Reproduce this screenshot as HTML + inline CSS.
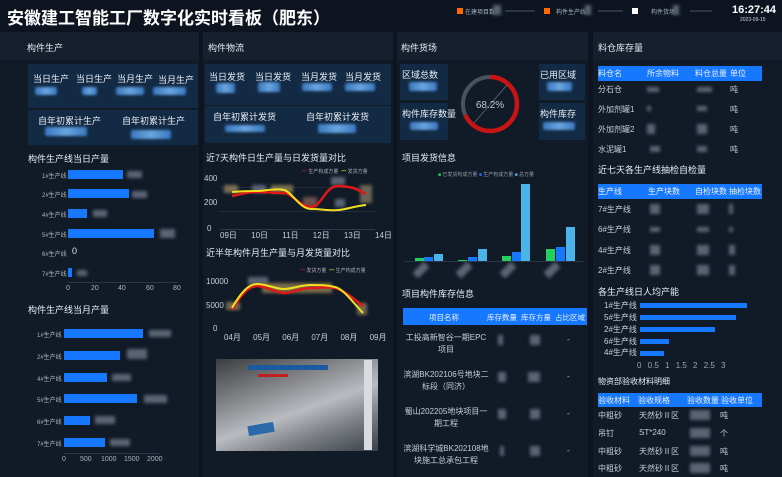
<!DOCTYPE html>
<html><head><meta charset="utf-8"><style>
*{margin:0;padding:0;box-sizing:border-box}
body{width:782px;height:477px;overflow:hidden;background:#0d1420;font-family:"Liberation Sans","Noto Sans CJK SC",sans-serif;color:#d8e0ea;position:relative}
.a{position:absolute;white-space:nowrap}
.p{position:absolute;background:#111a27}
.h{position:absolute;background:#151f2d;font-size:9px;color:#e6ecf3;padding-left:0}
.box{position:absolute;background:#132a44}
.bl{position:absolute;height:8px;border-radius:2px;background:linear-gradient(90deg,#3a78c0,#6aa6e0,#3a78c0);filter:blur(1.2px)}
.gr{position:absolute;background:#5a6474;filter:blur(1.5px)}
.t{font-size:9px;color:#e8eef5}
.s{font-size:6px;color:#a9b3c2}
.bar{position:absolute;background:#1677ff}
.th{position:absolute;background:#1677ff;color:#e8f1ff;font-size:8px}
.r{font-size:8px;color:#c7ced8}
</style></head><body>
<div class="a" style="left:7px;top:4px;font-size:17px;font-weight:bold;color:#fff">安徽建工智能工厂数字化实时看板（肥东）</div>
<div class="a" style="left:457px;top:8px;width:6px;height:6px;background:#ff6a00"></div><div class="a s" style="left:465px;top:7px">在建项目数</div><div class="gr" style="left:493px;top:5px;width:8px;height:10px"></div><div class="a" style="left:505px;top:10px;width:30px;height:2px;background:#2a3444"></div>
<div class="a" style="left:544px;top:8px;width:6px;height:6px;background:#ff6a00"></div><div class="a s" style="left:556px;top:7px">构件生产线</div><div class="gr" style="left:585px;top:5px;width:6px;height:10px"></div><div class="a" style="left:598px;top:10px;width:25px;height:2px;background:#2a3444"></div>
<div class="a" style="left:632px;top:8px;width:6px;height:6px;background:#fff"></div><div class="a s" style="left:651px;top:7px">构件货场</div><div class="gr" style="left:673px;top:5px;width:6px;height:10px"></div><div class="a" style="left:690px;top:10px;width:22px;height:2px;background:#2a3444"></div>
<div class="a" style="left:732px;top:4px;font-size:11px;font-weight:bold;color:#fff">16:27:44</div>
<div class="a" style="left:740px;top:17px;font-size:5px;color:#cfd6e0">2023-09-15</div>

<div class="p" style="left:0;top:32px;width:199px;height:445px"></div>
<div class="p" style="left:203px;top:32px;width:190px;height:445px"></div>
<div class="p" style="left:397px;top:32px;width:191px;height:445px"></div>
<div class="p" style="left:593px;top:32px;width:189px;height:445px"></div>
<div class="h" style="left:0;top:32px;width:199px;height:28px"><span class="a" style="left:27px;top:9px">构件生产</span></div>
<div class="h" style="left:203px;top:32px;width:190px;height:28px"><span class="a" style="left:5px;top:9px">构件物流</span></div>
<div class="h" style="left:397px;top:32px;width:191px;height:28px"><span class="a" style="left:4px;top:9px">构件货场</span></div>
<div class="h" style="left:593px;top:32px;width:189px;height:28px"><span class="a" style="left:5px;top:9px">料仓库存量</span></div>

<div class="box" style="left:28px;top:64px;width:170px;height:44px"></div>
<div class="box" style="left:28px;top:110px;width:170px;height:35px"></div>
<div class="a t" style="left:33px;top:72px">当日生产</div><div class="a t" style="left:76px;top:72px">当日生产</div><div class="a t" style="left:117px;top:72px">当月生产</div><div class="a t" style="left:158px;top:73px">当月生产</div>
<div class="bl" style="left:35px;top:87px;width:22px"></div><div class="bl" style="left:82px;top:87px;width:15px"></div><div class="bl" style="left:116px;top:87px;width:28px"></div><div class="bl" style="left:153px;top:87px;width:33px"></div>
<div class="a t" style="left:38px;top:114px">自年初累计生产</div><div class="a t" style="left:122px;top:114px">自年初累计生产</div>
<div class="bl" style="left:45px;top:127px;width:42px;height:9px"></div><div class="bl" style="left:131px;top:130px;width:40px;height:9px"></div>

<div class="a t" style="left:28px;top:152px">构件生产线当日产量</div>
<div class="a s" style="left:42px;top:171px">1#生产线</div><div class="bar" style="left:68px;top:170px;width:55px;height:9px"></div><div class="gr" style="left:127px;top:171px;width:15px;height:7px"></div>
<div class="a s" style="left:42px;top:190px">2#生产线</div><div class="bar" style="left:68px;top:189px;width:61px;height:9px"></div><div class="gr" style="left:132px;top:191px;width:15px;height:7px"></div>
<div class="a s" style="left:42px;top:210px">4#生产线</div><div class="bar" style="left:68px;top:209px;width:19px;height:9px"></div><div class="gr" style="left:93px;top:210px;width:14px;height:7px"></div>
<div class="a s" style="left:42px;top:230px">5#生产线</div><div class="bar" style="left:68px;top:229px;width:86px;height:9px"></div><div class="gr" style="left:160px;top:229px;width:15px;height:9px"></div>
<div class="a s" style="left:42px;top:249px">6#生产线</div><div class="a" style="left:72px;top:246px;font-size:9px">0</div>
<div class="a s" style="left:42px;top:269px">7#生产线</div><div class="bar" style="left:68px;top:268px;width:4px;height:9px"></div><div class="gr" style="left:77px;top:270px;width:10px;height:6px"></div>
<div class="a" style="left:68px;top:282px;width:110px;height:1px;background:#2b3545"></div>
<div class="a s" style="left:66px;top:285px;font-size:7px">0</div><div class="a s" style="left:91px;top:285px;font-size:7px">20</div><div class="a s" style="left:118px;top:285px;font-size:7px">40</div><div class="a s" style="left:146px;top:285px;font-size:7px">60</div><div class="a s" style="left:173px;top:285px;font-size:7px">80</div>

<div class="a t" style="left:28px;top:303px">构件生产线当月产量</div>
<div class="a s" style="left:37px;top:330px">1#生产线</div><div class="bar" style="left:64px;top:329px;width:79px;height:9px"></div><div class="gr" style="left:149px;top:330px;width:22px;height:7px"></div>
<div class="a s" style="left:37px;top:352px">2#生产线</div><div class="bar" style="left:64px;top:351px;width:56px;height:9px"></div><div class="gr" style="left:127px;top:349px;width:20px;height:10px"></div>
<div class="a s" style="left:37px;top:374px">4#生产线</div><div class="bar" style="left:64px;top:373px;width:43px;height:9px"></div><div class="gr" style="left:112px;top:374px;width:19px;height:7px"></div>
<div class="a s" style="left:37px;top:395px">5#生产线</div><div class="bar" style="left:64px;top:394px;width:73px;height:9px"></div><div class="gr" style="left:144px;top:395px;width:23px;height:8px"></div>
<div class="a s" style="left:37px;top:417px">6#生产线</div><div class="bar" style="left:64px;top:416px;width:26px;height:9px"></div><div class="gr" style="left:95px;top:416px;width:20px;height:8px"></div>
<div class="a s" style="left:37px;top:439px">7#生产线</div><div class="bar" style="left:64px;top:438px;width:41px;height:9px"></div><div class="gr" style="left:110px;top:439px;width:20px;height:7px"></div>
<div class="a" style="left:64px;top:453px;width:95px;height:1px;background:#2b3545"></div>
<div class="a s" style="left:62px;top:456px;font-size:7px">0</div><div class="a s" style="left:80px;top:456px;font-size:7px">500</div><div class="a s" style="left:101px;top:456px;font-size:7px">1000</div><div class="a s" style="left:124px;top:456px;font-size:7px">1500</div><div class="a s" style="left:147px;top:456px;font-size:7px">2000</div>

<div class="box" style="left:205px;top:64px;width:186px;height:41px"></div>
<div class="box" style="left:205px;top:106px;width:186px;height:37px"></div>
<div class="a t" style="left:209px;top:70px">当日发货</div><div class="a t" style="left:255px;top:70px">当日发货</div><div class="a t" style="left:301px;top:70px">当月发货</div><div class="a t" style="left:345px;top:70px">当月发货</div>
<div class="bl" style="left:216px;top:83px;width:19px;height:10px"></div><div class="bl" style="left:258px;top:82px;width:22px;height:10px"></div><div class="bl" style="left:302px;top:83px;width:30px"></div><div class="bl" style="left:345px;top:83px;width:30px"></div>
<div class="a t" style="left:213px;top:110px">自年初累计发货</div><div class="a t" style="left:306px;top:110px">自年初累计发货</div>
<div class="bl" style="left:225px;top:125px;width:40px;height:7px"></div><div class="bl" style="left:318px;top:124px;width:38px;height:9px"></div>

<div class="a t" style="left:206px;top:151px">近7天构件日生产量与日发货量对比</div>
<div class="a" style="left:302px;top:168px;font-size:5px;color:#aab"><span style="color:#e02020">━</span> 生产构成方量 &nbsp;<span style="color:#e8e020">━</span> 发货方量</div>
<div class="a" style="left:204px;top:174px;font-size:8px;color:#ccd">400</div><div class="a" style="left:204px;top:198px;font-size:8px;color:#ccd">200</div><div class="a" style="left:207px;top:224px;font-size:8px;color:#ccd">0</div>
<div class="a" style="left:220px;top:187px;width:155px;height:1px;background:#222c3a"></div><div class="a" style="left:220px;top:211px;width:155px;height:1px;background:#222c3a"></div><div class="a" style="left:220px;top:229px;width:155px;height:1px;background:#2e3848"></div>
<div class="gr" style="left:224px;top:185px;width:14px;height:8px;background:#7a7050"></div><div class="gr" style="left:252px;top:185px;width:14px;height:8px"></div><div class="gr" style="left:271px;top:185px;width:22px;height:8px;background:#7a7050"></div><div class="gr" style="left:303px;top:197px;width:14px;height:10px;background:#6a5048"></div><div class="gr" style="left:331px;top:177px;width:14px;height:8px"></div><div class="gr" style="left:335px;top:199px;width:10px;height:8px"></div><div class="gr" style="left:360px;top:185px;width:12px;height:18px;background:#6a6458"></div>
<div class="gr" style="left:248px;top:277px;width:20px;height:8px"></div><div class="gr" style="left:262px;top:283px;width:70px;height:10px;background:#7a6c48"></div><div class="gr" style="left:226px;top:302px;width:14px;height:8px;background:#706a50"></div><div class="gr" style="left:357px;top:303px;width:10px;height:12px;background:#706a50"></div>
<svg style="position:absolute;left:200px;top:160px" width="190" height="180" xmlns="http://www.w3.org/2000/svg"><g transform="translate(-200,-160)">
<path d="M232,196 C245,193 250,192 257,192 S276,193 284,193 S300,207 311,207 S325,185 339,186 S355,188 366,194" fill="none" stroke="#e01818" stroke-width="2.5"/>
<path d="M232,192 C245,191 250,191 257,191 S276,188 284,190 S300,209 311,209 S330,211 339,210 S355,206 366,205" fill="none" stroke="#f0e020" stroke-width="2"/>
<path d="M232,310 C240,296 248,286 257,286 S276,293 284,293 S300,288 311,288 S326,286 335,288 S355,300 363,306" fill="none" stroke="#e01818" stroke-width="2.5"/>
<path d="M232,308 C240,294 248,284 257,284 S276,289 284,289 S300,285 311,285 S326,285 335,287 S355,305 363,313" fill="none" stroke="#f0e020" stroke-width="2"/>
</g></svg>
<div class="a" style="left:220px;top:230px;font-size:8px;color:#ccd;word-spacing:12px">09日 10日 11日 12日 13日 14日</div>
<div class="a t" style="left:206px;top:246px">近半年构件月生产量与月发货量对比</div>
<div class="a" style="left:300px;top:267px;font-size:5px;color:#aab"><span style="color:#e02020">━</span> 发货方量 &nbsp;<span style="color:#e8e020">━</span> 生产构成方量</div>
<div class="a" style="left:206px;top:277px;font-size:8px;color:#ccd">10000</div><div class="a" style="left:206px;top:301px;font-size:8px;color:#ccd">5000</div><div class="a" style="left:213px;top:324px;font-size:8px;color:#ccd">0</div>
<div class="a" style="left:224px;top:332px;font-size:8px;color:#ccd;word-spacing:10px">04月 05月 06月 07月 08月 09月</div>
<div class="a" style="left:216px;top:359px;width:162px;height:92px;background:linear-gradient(160deg,#3a3c40 0%,#8a8c90 35%,#b8bcc0 55%,#7a7e84 75%,#3a4048 100%)"></div>
<div class="a" style="left:248px;top:365px;width:80px;height:5px;background:#1c5aa0"></div><div class="a" style="left:258px;top:374px;width:30px;height:3px;background:#c02020"></div><div class="a" style="left:248px;top:424px;width:26px;height:10px;background:#2a6aa8;transform:rotate(-10deg)"></div><div class="a" style="left:364px;top:360px;width:8px;height:90px;background:#d8dce0"></div>

<div class="box" style="left:400px;top:64px;width:48px;height:36px"></div><div class="box" style="left:400px;top:103px;width:48px;height:37px"></div>
<div class="box" style="left:539px;top:64px;width:46px;height:36px"></div><div class="box" style="left:539px;top:103px;width:46px;height:37px"></div>
<div class="a t" style="left:402px;top:68px">区域总数</div><div class="bl" style="left:409px;top:82px;width:28px;height:9px"></div>
<div class="a t" style="left:402px;top:107px">构件库存数量</div><div class="bl" style="left:410px;top:122px;width:28px;height:8px"></div>
<div class="a t" style="left:540px;top:68px">已用区域</div><div class="bl" style="left:547px;top:82px;width:25px;height:9px"></div>
<div class="a t" style="left:540px;top:107px">构件库存</div><div class="bl" style="left:543px;top:122px;width:32px;height:8px"></div>
<svg style="position:absolute;left:459px;top:71px" width="62" height="66" xmlns="http://www.w3.org/2000/svg"><circle cx="31" cy="33" r="27" fill="none" stroke="#4a5260" stroke-width="4"/><circle cx="31" cy="33" r="27" fill="none" stroke="#c81414" stroke-width="4.5" stroke-dasharray="115.7 200" transform="rotate(-90 31 33)"/><line x1="15" y1="52" x2="48" y2="14" stroke="#6a7080" stroke-width="0.7"/><text x="31" y="37" font-size="10" fill="#c0c8d4" text-anchor="middle" font-family="Liberation Sans">68.2%</text></svg>
<div class="a t" style="left:402px;top:151px">项目发货信息</div>
<div class="a" style="left:438px;top:171px;font-size:5px;color:#99a"><span style="color:#22d060">■</span> 已发货构成方量 <span style="color:#1677ff">■</span> 生产构成方量 <span style="color:#4ab4e8">■</span> 总方量</div>
<div class="a" style="left:405px;top:261px;width:178px;height:1px;background:#2b3545"></div>
<div class="a" style="left:415px;top:258px;width:9px;height:3px;background:#22d060"></div><div class="a" style="left:424px;top:257px;width:9px;height:4px;background:#1677ff"></div><div class="a" style="left:434px;top:254px;width:9px;height:7px;background:#4ab4e8"></div>
<div class="a" style="left:458px;top:260px;width:9px;height:1px;background:#22d060"></div><div class="a" style="left:468px;top:257px;width:9px;height:4px;background:#1677ff"></div><div class="a" style="left:478px;top:249px;width:9px;height:12px;background:#4ab4e8"></div>
<div class="a" style="left:502px;top:256px;width:9px;height:5px;background:#22d060"></div><div class="a" style="left:512px;top:252px;width:9px;height:9px;background:#1677ff"></div><div class="a" style="left:521px;top:184px;width:9px;height:77px;background:#4ab4e8"></div>
<div class="a" style="left:546px;top:249px;width:9px;height:12px;background:#22d060"></div><div class="a" style="left:556px;top:247px;width:9px;height:14px;background:#1677ff"></div><div class="a" style="left:566px;top:227px;width:9px;height:34px;background:#4ab4e8"></div>
<div class="gr" style="left:413px;top:266px;width:16px;height:8px;transform:rotate(-45deg)"></div><div class="gr" style="left:456px;top:266px;width:16px;height:8px;transform:rotate(-45deg)"></div><div class="gr" style="left:500px;top:266px;width:16px;height:8px;transform:rotate(-45deg)"></div><div class="gr" style="left:544px;top:266px;width:16px;height:8px;transform:rotate(-45deg)"></div>
<div class="a t" style="left:402px;top:287px">项目构件库存信息</div>
<div class="th" style="left:403px;top:308px;width:184px;height:17px;font-size:7.5px"><span class="a" style="left:26px;top:4px">项目名称</span><span class="a" style="left:84px;top:4px">库存数量</span><span class="a" style="left:118px;top:4px">库存方量</span><span class="a" style="left:152px;top:4px">占比区域</span></div>
<div class="a r" style="left:403px;top:332px;width:86px;text-align:center;white-space:normal;line-height:12px">工投高新智谷一期EPC项目</div>
<div class="a r" style="left:403px;top:369px;width:86px;text-align:center;white-space:normal;line-height:12px">滨湖BK202106号地块二标段（同济）</div>
<div class="a r" style="left:403px;top:406px;width:86px;text-align:center;white-space:normal;line-height:12px">蜀山202205地块项目一期工程</div>
<div class="a r" style="left:403px;top:443px;width:86px;text-align:center;white-space:normal;line-height:12px">滨湖科学城BK202108地块施工总承包工程</div>
<div class="gr" style="left:498px;top:335px;width:5px;height:10px"></div><div class="gr" style="left:530px;top:335px;width:10px;height:10px"></div><div class="a r" style="left:567px;top:335px">-</div>
<div class="gr" style="left:498px;top:372px;width:8px;height:10px"></div><div class="gr" style="left:528px;top:372px;width:12px;height:10px"></div><div class="a r" style="left:567px;top:372px">-</div>
<div class="gr" style="left:498px;top:409px;width:8px;height:10px"></div><div class="gr" style="left:530px;top:409px;width:10px;height:10px"></div><div class="a r" style="left:567px;top:409px">-</div>
<div class="gr" style="left:500px;top:446px;width:4px;height:10px"></div><div class="gr" style="left:530px;top:446px;width:10px;height:10px"></div><div class="a r" style="left:567px;top:446px">-</div>

<div class="th" style="left:598px;top:66px;width:164px;height:15px"><span class="a" style="left:0;top:2px">料仓名</span><span class="a" style="left:49px;top:2px">所余物料</span><span class="a" style="left:97px;top:2px">料仓总量</span><span class="a" style="left:132px;top:2px">单位</span></div>
<div class="a r" style="left:598px;top:84px">分石仓</div><div class="gr" style="left:647px;top:87px;width:12px;height:5px"></div><div class="gr" style="left:697px;top:87px;width:15px;height:5px"></div><div class="a r" style="left:730px;top:84px">吨</div>
<div class="a r" style="left:598px;top:104px">外加剂罐1</div><div class="gr" style="left:647px;top:106px;width:4px;height:5px"></div><div class="gr" style="left:697px;top:106px;width:10px;height:5px"></div><div class="a r" style="left:730px;top:104px">吨</div>
<div class="a r" style="left:598px;top:124px">外加剂罐2</div><div class="gr" style="left:647px;top:124px;width:8px;height:10px"></div><div class="gr" style="left:697px;top:124px;width:10px;height:10px"></div><div class="a r" style="left:730px;top:124px">吨</div>
<div class="a r" style="left:598px;top:144px">水泥罐1</div><div class="gr" style="left:650px;top:146px;width:10px;height:6px"></div><div class="gr" style="left:697px;top:146px;width:10px;height:6px"></div><div class="a r" style="left:730px;top:144px">吨</div>
<div class="a t" style="left:598px;top:163px">近七天各生产线抽检自检量</div>
<div class="th" style="left:598px;top:184px;width:164px;height:15px"><span class="a" style="left:0;top:2px">生产线</span><span class="a" style="left:50px;top:2px">生产块数</span><span class="a" style="left:97px;top:2px">自检块数</span><span class="a" style="left:131px;top:2px">抽检块数</span></div>
<div class="a r" style="left:598px;top:204px">7#生产线</div><div class="gr" style="left:650px;top:204px;width:10px;height:10px"></div><div class="gr" style="left:697px;top:204px;width:12px;height:10px"></div><div class="gr" style="left:729px;top:204px;width:4px;height:10px"></div>
<div class="a r" style="left:598px;top:224px">6#生产线</div><div class="gr" style="left:650px;top:227px;width:10px;height:5px"></div><div class="gr" style="left:697px;top:227px;width:12px;height:5px"></div><div class="gr" style="left:729px;top:227px;width:4px;height:5px"></div>
<div class="a r" style="left:598px;top:245px">4#生产线</div><div class="gr" style="left:650px;top:245px;width:10px;height:10px"></div><div class="gr" style="left:697px;top:245px;width:12px;height:10px"></div><div class="gr" style="left:729px;top:245px;width:6px;height:10px"></div>
<div class="a r" style="left:598px;top:265px">2#生产线</div><div class="gr" style="left:650px;top:265px;width:10px;height:10px"></div><div class="gr" style="left:697px;top:265px;width:12px;height:10px"></div><div class="gr" style="left:729px;top:265px;width:6px;height:10px"></div>
<div class="a t" style="left:598px;top:285px">各生产线日人均产能</div>
<div class="a r" style="left:604px;top:300px">1#生产线</div><div class="bar" style="left:640px;top:303px;width:107px;height:5px"></div>
<div class="a r" style="left:604px;top:312px">5#生产线</div><div class="bar" style="left:640px;top:315px;width:96px;height:5px"></div>
<div class="a r" style="left:604px;top:324px">2#生产线</div><div class="bar" style="left:640px;top:327px;width:75px;height:5px"></div>
<div class="a r" style="left:604px;top:336px">6#生产线</div><div class="bar" style="left:640px;top:339px;width:29px;height:5px"></div>
<div class="a r" style="left:604px;top:347px">4#生产线</div><div class="bar" style="left:640px;top:351px;width:24px;height:5px"></div>
<div class="a" style="left:637px;top:361px;font-size:8px;color:#99a4b4;word-spacing:4px">0 0.5 1 1.5 2 2.5 3</div>
<div class="a t" style="left:598px;top:376px;font-size:8px">物资部验收材料明细</div>
<div class="th" style="left:598px;top:393px;width:164px;height:14px"><span class="a" style="left:0;top:2px">验收材料</span><span class="a" style="left:40px;top:2px">验收规格</span><span class="a" style="left:89px;top:2px">验收数量</span><span class="a" style="left:123px;top:2px">验收单位</span></div>
<div class="a r" style="left:598px;top:410px">中粗砂</div><div class="a r" style="left:639px;top:410px">天然砂Ⅱ区</div><div class="gr" style="left:690px;top:410px;width:20px;height:10px"></div><div class="a r" style="left:720px;top:410px">吨</div>
<div class="a r" style="left:598px;top:428px">吊钉</div><div class="a r" style="left:639px;top:428px">ST*240</div><div class="gr" style="left:690px;top:428px;width:20px;height:10px"></div><div class="a r" style="left:720px;top:428px">个</div>
<div class="a r" style="left:598px;top:446px">中粗砂</div><div class="a r" style="left:639px;top:446px">天然砂Ⅱ区</div><div class="gr" style="left:690px;top:446px;width:20px;height:10px"></div><div class="a r" style="left:720px;top:446px">吨</div>
<div class="a r" style="left:598px;top:463px">中粗砂</div><div class="a r" style="left:639px;top:463px">天然砂Ⅱ区</div><div class="gr" style="left:690px;top:463px;width:20px;height:10px"></div><div class="a r" style="left:720px;top:463px">吨</div>
</body></html>
